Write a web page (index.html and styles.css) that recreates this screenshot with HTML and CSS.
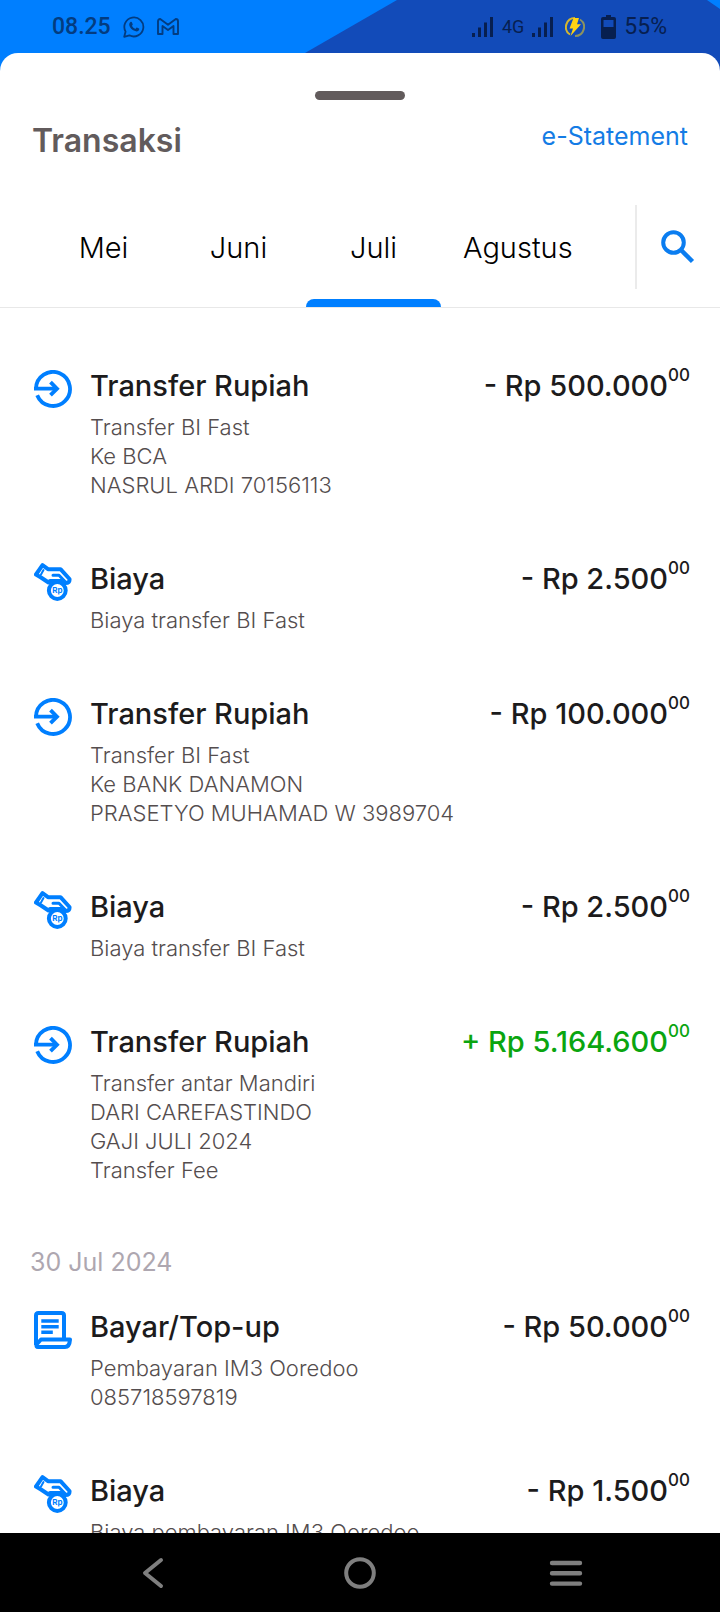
FILE: index.html
```
<!DOCTYPE html>
<html lang="id">
<head>
  <meta charset="utf-8">
  <meta name="viewport" content="width=device-width, initial-scale=1">
  <title>Transaksi</title>
  <link rel="stylesheet" href="styles.css">
</head>
<body>
  <!-- icons used more than once -->
  <svg class="sprite" aria-hidden="true">
    <symbol id="icon-transfer" viewBox="0 0 38 38">
      <path d="M0 18.7H22M2 18.7A17 17 0 1 1 3.2 25.2" fill="none" stroke="currentColor" stroke-width="3.8"/>
      <path d="M16.5 12.2L23 18.7L16.5 25.2" fill="none" stroke="currentColor" stroke-width="3.8"/>
    </symbol>
    <symbol id="icon-fee" viewBox="0 0 38 38">
      <g fill="none" stroke="currentColor" stroke-linejoin="round" stroke-linecap="round">
        <path d="M8.5 2.2L2 11.5L7 14.5L14.5 19.5H28L31.5 20Q36 20 35.5 16L26.5 6.2H14Z" stroke-width="4"/>
        <path d="M9.5 7L7 11.5" stroke-width="2"/>
        <path d="M19 12.2H25L31 18.5" stroke-width="3"/>
        <path d="M16 18H27" stroke-width="4"/>
        <circle cx="23.3" cy="27.5" r="8.4" fill="#fff" stroke-width="4"/>
      </g>
      <text x="23.5" y="30" class="coin-text">Rp</text>
    </symbol>
    <symbol id="icon-bill" viewBox="0 0 38 38">
      <path d="M2 34V4.5Q2 2 4.5 2H27.5Q30 2 30 4.500V27" fill="none" stroke="currentColor" stroke-width="4"/>
      <path d="M7.3 10H24.7M7.3 15.8H24.7M7.3 21.3H18.8" fill="none" stroke="currentColor" stroke-width="3.6"/>
      <path d="M7 28.5H36Q35.5 36 31 36H4Q2 36 2.5 33.5Z" fill="none" stroke="currentColor" stroke-width="4" stroke-linejoin="round"/>
    </symbol>
    <symbol id="icon-signal" viewBox="0 0 22 20">
      <path d="M0 16h3v4H0zM6 10.5h3V20H6zM12 5.5h3V20h-3zM18 0h3v20h-3z" fill="currentColor"/>
    </symbol>
  </svg>

  <div class="status-bar">
    <svg class="status-bg" viewBox="0 0 720 72" preserveAspectRatio="none" aria-hidden="true">
      <path d="M272 72L397 0H707L720 9V72Z" fill="#124bb9"/>
    </svg>
    <div class="status-left">
      <span>08.25</span>
      <svg width="22" height="22" viewBox="0 0 22 22" aria-hidden="true">
        <path d="M1.2 20.8L2.6 15.6A9.5 9.5 0 1 1 6.4 19.3Z" fill="none" stroke="currentColor" stroke-width="1.8" stroke-linejoin="round"/>
        <path d="M7.2 6.3C8 5.6 8.7 5.8 9 6.5L9.7 8.2C9.9 8.8 9.3 9.3 8.9 9.8C9.7 11.3 10.9 12.3 12.3 12.9L13.4 11.7C13.7 11.4 14 11.5 14.4 11.7L16.1 12.6C16.6 13 16.1 14.3 15.4 14.8C14.3 15.7 12.5 15.5 10.8 14.6C8.8 13.5 7.3 11.8 6.6 10.2C5.9 8.7 6.2 7.2 7.2 6.3Z" fill="currentColor"/>
      </svg>
      <svg width="22" height="17" viewBox="0 0 22 17" aria-hidden="true">
        <path d="M1 3.2Q1 1 3.2 1L11 6.8L18.8 1Q21 1 21 3.2V16H16.5V8L11 12L5.5 8V16H1Z" fill="none" stroke="currentColor" stroke-width="1.9" stroke-linejoin="round"/>
      </svg>
    </div>
    <div class="status-right">
      <svg width="22" height="20"><use href="#icon-signal"/></svg>
      <span class="network">4G</span>
      <svg width="22" height="20"><use href="#icon-signal"/></svg>
      <svg class="icon-charge" width="20" height="20" viewBox="0 0 20 20" aria-hidden="true">
        <path d="M5 17.5A9 9 0 0 1 10 1" fill="none" stroke="#d5b62e" stroke-width="2"/>
        <path d="M15 2.5A9 9 0 0 1 10 19" fill="none" stroke="#8d935f" stroke-width="2"/>
        <path d="M8.5 1H14L12 7.2H16L5.5 19L8 11.5H4.5Z" fill="#ffd312"/>
      </svg>
      <svg width="15" height="24" viewBox="0 0 15 24" aria-hidden="true">
        <path fill-rule="evenodd" d="M5 0H10V2H13Q15 2 15 4V22Q15 24 13 24H2Q0 24 0 22V4Q0 2 2 2H5ZM2.5 5V12H12.5V5Z" fill="currentColor"/>
      </svg>
      <span>55%</span>
    </div>
  </div>

  <main class="sheet">
    <div class="handle"></div>

    <header class="sheet-header">
      <h1>Transaksi</h1>
      <a href="#" class="statement-link">e-Statement</a>
    </header>

    <div class="month-bar">
      <nav class="months">
        <button type="button" class="month">Mei</button>
        <button type="button" class="month">Juni</button>
        <button type="button" class="month active">Juli</button>
        <button type="button" class="month">Agustus</button>
      </nav>
      <button type="button" class="search" aria-label="Cari">
        <svg width="34" height="34" viewBox="0 0 34 34" aria-hidden="true">
          <circle cx="12.5" cy="12.5" r="10.3" fill="none" stroke="currentColor" stroke-width="4"/>
          <path d="M19.5 19.5L31.5 31.5" fill="none" stroke="currentColor" stroke-width="4.5"/>
        </svg>
      </button>
    </div>

    <div class="history">
      <ul class="transactions">
        <li class="transaction">
          <svg class="icon"><use href="#icon-transfer"/></svg>
          <div class="info">
            <h2>Transfer Rupiah</h2>
            <p>Transfer BI Fast<br>Ke BCA<br>NASRUL ARDI 70156113</p>
          </div>
          <div class="amount">- Rp 500.000<sup>00</sup></div>
        </li>
        <li class="transaction">
          <svg class="icon"><use href="#icon-fee"/></svg>
          <div class="info">
            <h2>Biaya</h2>
            <p>Biaya transfer BI Fast</p>
          </div>
          <div class="amount">- Rp 2.500<sup>00</sup></div>
        </li>
        <li class="transaction">
          <svg class="icon"><use href="#icon-transfer"/></svg>
          <div class="info">
            <h2>Transfer Rupiah</h2>
            <p>Transfer BI Fast<br>Ke BANK DANAMON<br>PRASETYO MUHAMAD W 3989704</p>
          </div>
          <div class="amount">- Rp 100.000<sup>00</sup></div>
        </li>
        <li class="transaction">
          <svg class="icon"><use href="#icon-fee"/></svg>
          <div class="info">
            <h2>Biaya</h2>
            <p>Biaya transfer BI Fast</p>
          </div>
          <div class="amount">- Rp 2.500<sup>00</sup></div>
        </li>
        <li class="transaction">
          <svg class="icon"><use href="#icon-transfer"/></svg>
          <div class="info">
            <h2>Transfer Rupiah</h2>
            <p>Transfer antar Mandiri<br>DARI CAREFASTINDO<br>GAJI JULI 2024<br>Transfer Fee</p>
          </div>
          <div class="amount income">+ Rp 5.164.600<sup>00</sup></div>
        </li>
      </ul>

      <h3 class="date">30 Jul 2024</h3>
      <ul class="transactions">
        <li class="transaction">
          <svg class="icon"><use href="#icon-bill"/></svg>
          <div class="info">
            <h2>Bayar/Top-up</h2>
            <p>Pembayaran IM3 Ooredoo<br>085718597819</p>
          </div>
          <div class="amount">- Rp 50.000<sup>00</sup></div>
        </li>
        <li class="transaction">
          <svg class="icon"><use href="#icon-fee"/></svg>
          <div class="info">
            <h2>Biaya</h2>
            <p>Biaya pembayaran IM3 Ooredoo</p>
          </div>
          <div class="amount">- Rp 1.500<sup>00</sup></div>
        </li>
      </ul>
    </div>
  </main>

  <footer class="system-nav">
    <button type="button" aria-label="Kembali">
      <svg width="34" height="34" viewBox="0 0 34 34"><path d="M24 4L8 17L24 30" fill="none" stroke="currentColor" stroke-width="4" stroke-linecap="round" stroke-linejoin="round"/></svg>
    </button>
    <button type="button" aria-label="Beranda">
      <svg width="34" height="34" viewBox="0 0 34 34"><circle cx="17" cy="17" r="13.8" fill="none" stroke="currentColor" stroke-width="4"/></svg>
    </button>
    <button type="button" aria-label="Menu">
      <svg width="34" height="34" viewBox="0 0 34 34"><path d="M3 7H31M3 17.3H31M3 27.6H31" fill="none" stroke="currentColor" stroke-width="4.4" stroke-linecap="round"/></svg>
    </button>
  </footer>
</body>
</html>
```
FILE: styles.css
```
* {
  box-sizing: border-box;
}

body {
  margin: 0;
  height: 100vh;
  display: flex;
  flex-direction: column;
  overflow: hidden;
  background: #007fff;
  color: #1c1b1c;
  font-family: Inter, "Open Sans", sans-serif;
}

h1, h2, h3, p, ul {
  margin: 0;
  padding: 0;
}

ul {
  list-style: none;
}

button {
  border: none;
  padding: 0;
  background: none;
  font-family: inherit;
  cursor: pointer;
}

svg {
  display: block;
  flex-shrink: 0;
}

.sprite {
  position: absolute;
  width: 0;
  height: 0;
}

/* Status bar */
.status-bar {
  position: relative;
  flex-shrink: 0;
  display: flex;
  justify-content: space-between;
  height: 53px;
  padding: 0 53px 0 52px;
  font-family: Roboto, sans-serif;
  font-size: 23px;
}

.status-bg {
  position: absolute;
  top: 0;
  left: 0;
  width: 100%;
  height: 72px;
}

.status-left, .status-right {
  position: relative;
  display: flex;
  align-items: center;
  color: #033c80;
}

.status-left {
  gap: 12px;
  font-weight: 500;
}

.status-right {
  gap: 8px;
  color: #071f50;
}

.network {
  font-size: 18px;
}

.icon-charge {
  margin: 0 8px 0 3px;
}

/* Sheet */
.sheet {
  position: relative;
  flex: 1;
  min-height: 0;
  overflow: hidden;
  background: #fff;
  border-radius: 18px 18px 0 0;
}

.handle {
  width: 90px;
  height: 9px;
  margin: 38px auto 0;
  border-radius: 5px;
  background: #625b5c;
}

.sheet-header {
  display: flex;
  justify-content: space-between;
  padding: 20px 32px 0;
}

.sheet-header h1 {
  font-size: 32px;
  line-height: 42px;
  font-weight: 600;
  color: #625b5c;
}

.statement-link {
  font-size: 25px;
  line-height: 32px;
  color: #147ce5;
  text-decoration: none;
}

/* Month tabs */
.month-bar {
  display: flex;
  align-items: center;
  height: 126px;
  margin-top: 20px;
  border-bottom: 1px solid #e8e8e8;
}

.months {
  flex: 1;
  display: flex;
  height: 100%;
  padding-left: 36px;
}

.month {
  position: relative;
  min-width: 135px;
  padding: 6px 22px 0;
  font-size: 29px;
  font-weight: 300;
  color: #000;
}

.month.active::after {
  content: "";
  position: absolute;
  left: 0;
  right: 0;
  bottom: 0;
  height: 8px;
  border-radius: 8px 8px 0 0;
  background: #007fff;
}

.search {
  display: flex;
  align-items: center;
  height: 84px;
  margin-top: 4px;
  padding: 0 25px 0 24px;
  border-left: 2px solid #ebebeb;
  color: #0b7df0;
}

/* Transaction list */
.history {
  padding: 60px 30px 0;
}

.transaction {
  display: flex;
  padding-left: 4px;
  margin-bottom: 61px;
}

.icon {
  width: 38px;
  height: 38px;
  margin: 2px 18px 0 0;
  color: #007fff;
}

.coin-text {
  font-size: 8px;
  font-weight: 700;
  text-anchor: middle;
  fill: #007fff;
}

.info {
  flex: 1;
}

.info h2, .amount {
  font-size: 29px;
  line-height: 36px;
  font-weight: 500;
}

.info p {
  margin-top: 9px;
  font-size: 22px;
  line-height: 29px;
  font-weight: 300;
  color: #544d4e;
}

.amount {
  white-space: nowrap;
}

.amount sup {
  font-size: 17px;
  line-height: 0;
  vertical-align: 15px;
}

.amount.income {
  color: #0aa50f;
}

.date {
  margin: 0 0 31px;
  font-size: 25px;
  line-height: 32px;
  font-weight: 400;
  color: #aea7b0;
}

/* System navigation */
.system-nav {
  position: relative;
  flex-shrink: 0;
  display: grid;
  grid-template-columns: repeat(3, 1fr);
  height: 79px;
  padding: 0 7%;
  background: #000;
}

.system-nav button {
  display: flex;
  align-items: center;
  justify-content: center;
  color: #7f7f7f;
}
```
